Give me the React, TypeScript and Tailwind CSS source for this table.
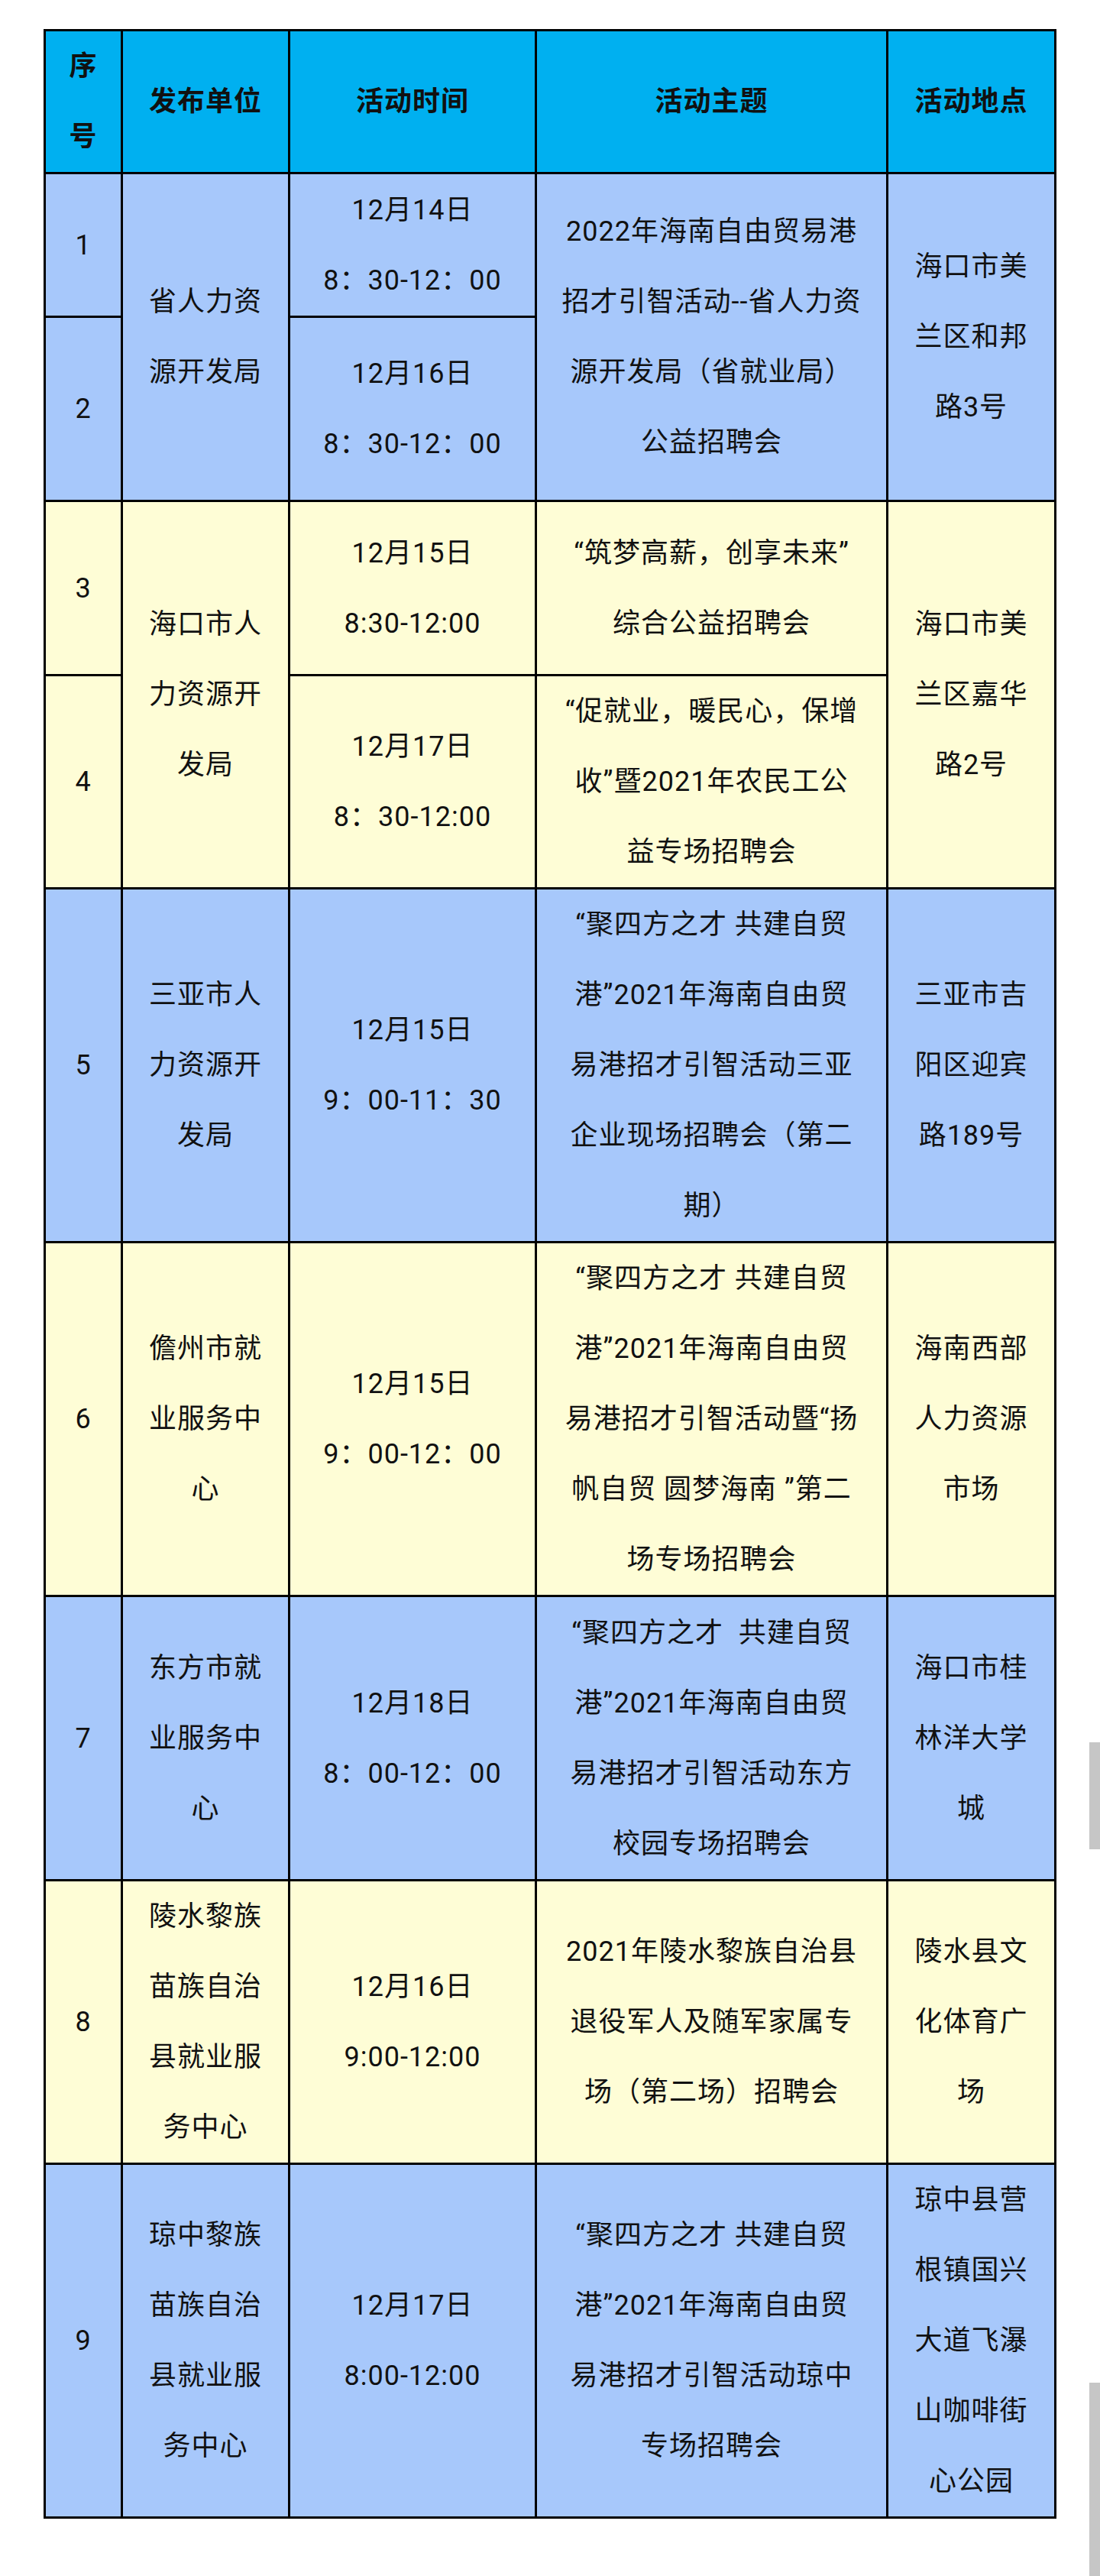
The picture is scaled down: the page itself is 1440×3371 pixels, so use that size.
import React from "react";

type Cell = { lines: string[]; span?: number };
type Row = { h: string; bg: string; cells: Cell[] };

const blue = "bg-[#a7c8fb]";
const yellow = "bg-[#fefdd6]";

const rows: Row[] = [
  {
    h: "h-[188px]",
    bg: blue,
    cells: [
      { lines: ["1"] },
      { lines: ["省人力资", "源开发局"], span: 2 },
      { lines: ["12月14日", "8：30-12：00"] },
      {
        lines: ["2022年海南自由贸易港", "招才引智活动--省人力资", "源开发局（省就业局）", "公益招聘会"],
        span: 2,
      },
      { lines: ["海口市美", "兰区和邦", "路3号"], span: 2 },
    ],
  },
  {
    h: "h-[241px]",
    bg: blue,
    cells: [{ lines: ["2"] }, { lines: ["12月16日", "8：30-12：00"] }],
  },
  {
    h: "h-[228px]",
    bg: yellow,
    cells: [
      { lines: ["3"] },
      { lines: ["海口市人", "力资源开", "发局"], span: 2 },
      { lines: ["12月15日", "8:30-12:00"] },
      { lines: ["“筑梦高薪，创享未来”", "综合公益招聘会"] },
      { lines: ["海口市美", "兰区嘉华", "路2号"], span: 2 },
    ],
  },
  {
    h: "h-[279px]",
    bg: yellow,
    cells: [
      { lines: ["4"] },
      { lines: ["12月17日", "8：30-12:00"] },
      { lines: ["“促就业，暖民心，保增", "收”暨2021年农民工公", "益专场招聘会"] },
    ],
  },
  {
    h: "h-[463px]",
    bg: blue,
    cells: [
      { lines: ["5"] },
      { lines: ["三亚市人", "力资源开", "发局"] },
      { lines: ["12月15日", "9：00-11：30"] },
      {
        lines: [
          "“聚四方之才 共建自贸",
          "港”2021年海南自由贸",
          "易港招才引智活动三亚",
          "企业现场招聘会（第二",
          "期）",
        ],
      },
      { lines: ["三亚市吉", "阳区迎宾", "路189号"] },
    ],
  },
  {
    h: "h-[463px]",
    bg: yellow,
    cells: [
      { lines: ["6"] },
      { lines: ["儋州市就", "业服务中", "心"] },
      { lines: ["12月15日", "9：00-12：00"] },
      {
        lines: [
          "“聚四方之才 共建自贸",
          "港”2021年海南自由贸",
          "易港招才引智活动暨“扬",
          "帆自贸 圆梦海南 ”第二",
          "场专场招聘会",
        ],
      },
      { lines: ["海南西部", "人力资源", "市场"] },
    ],
  },
  {
    h: "h-[372px]",
    bg: blue,
    cells: [
      { lines: ["7"] },
      { lines: ["东方市就", "业服务中", "心"] },
      { lines: ["12月18日", "8：00-12：00"] },
      {
        lines: ["“聚四方之才  共建自贸", "港”2021年海南自由贸", "易港招才引智活动东方", "校园专场招聘会"],
      },
      { lines: ["海口市桂", "林洋大学", "城"] },
    ],
  },
  {
    h: "h-[369px]",
    bg: yellow,
    cells: [
      { lines: ["8"] },
      { lines: ["陵水黎族", "苗族自治", "县就业服", "务中心"] },
      { lines: ["12月16日", "9:00-12:00"] },
      { lines: ["2021年陵水黎族自治县", "退役军人及随军家属专", "场（第二场）招聘会"] },
      { lines: ["陵水县文", "化体育广", "场"] },
    ],
  },
  {
    h: "h-[463px]",
    bg: blue,
    cells: [
      { lines: ["9"] },
      { lines: ["琼中黎族", "苗族自治", "县就业服", "务中心"] },
      { lines: ["12月17日", "8:00-12:00"] },
      {
        lines: ["“聚四方之才 共建自贸", "港”2021年海南自由贸", "易港招才引智活动琼中", "专场招聘会"],
      },
      { lines: ["琼中县营", "根镇国兴", "大道飞瀑", "山咖啡街", "心公园"] },
    ],
  },
];

const cellCls = "border-[3px] border-black p-0 text-center align-middle";

function Lines({ lines }: { lines: string[] }) {
  return (
    <>
      {lines.map((l, i) => (
        <div key={i} className="whitespace-pre">
          {l}
        </div>
      ))}
    </>
  );
}

const headers = [["序", "号"], ["发布单位"], ["活动时间"], ["活动主题"], ["活动地点"]];

export default function App() {
  return (
    <div
      className="relative min-h-[3371px] bg-white pt-[38px] text-[36px] leading-[92px] tracking-[1px] text-[#111]"
      style={{ fontFamily: 'Roboto, "Noto Sans CJK SC", sans-serif' }}
    >
      <table className="mx-auto w-[1323px] table-fixed border-collapse border-[3px] border-black">
        <colgroup>
          <col className="w-[101px]" />
          <col className="w-[219px]" />
          <col className="w-[323px]" />
          <col className="w-[460px]" />
          <col className="w-[220px]" />
        </colgroup>
        <thead>
          <tr className="h-[187px] bg-[#00b0f0] font-bold">
            {headers.map((h, i) => (
              <th key={i} className={cellCls}>
                <Lines lines={h} />
              </th>
            ))}
          </tr>
        </thead>
        <tbody>
          {rows.map((r, i) => (
            <tr key={i} className={`${r.h} ${r.bg}`}>
              {r.cells.map((c, j) => (
                <td key={j} rowSpan={c.span} className={cellCls}>
                  <Lines lines={c.lines} />
                </td>
              ))}
            </tr>
          ))}
        </tbody>
      </table>

      {/* scrollbar remnants on the right edge */}
      <div className="absolute right-0 top-[2280px] h-[140px] w-[14px] bg-[#c6c6c6]" />
      <div className="absolute right-0 top-[3118px] h-[253px] w-[14px] bg-[#c6c6c6]" />
    </div>
  );
}
